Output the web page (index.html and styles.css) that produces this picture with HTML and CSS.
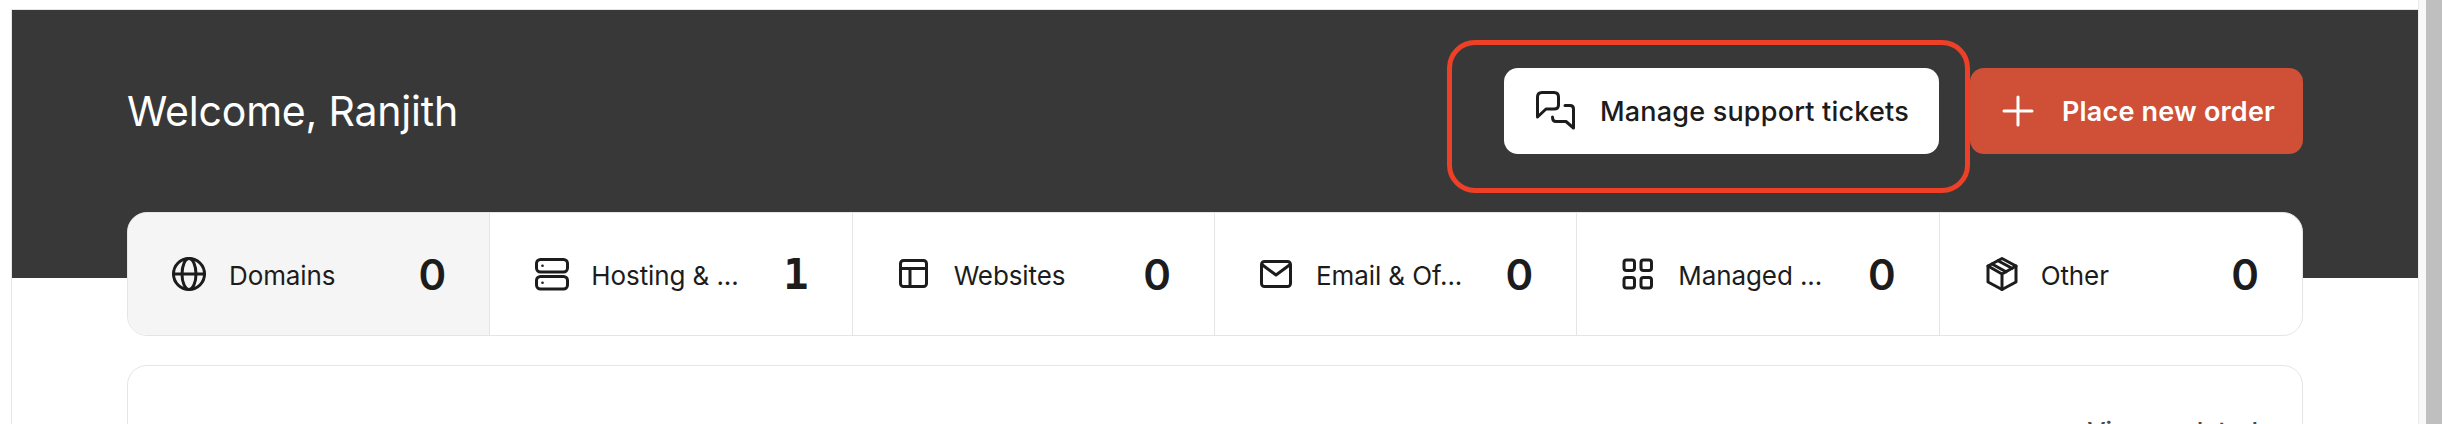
FILE: index.html
```html
<!DOCTYPE html>
<html lang="en">
<head>
    <meta charset="UTF-8">
    <meta name="viewport" content="width=device-width, initial-scale=1.0">
    <title>Dashboard</title>
    <link rel="stylesheet" href="styles.css">
</head>
<body>
    <div class="shell">
        <div class="hero">
            <h1>Welcome, Ranjith</h1>
            <div class="hero-actions">
                <div class="support">
                    <a class="button button-light">
                        <svg class="icon" viewBox="0 0 40 40">
                            <path d="M1.5 26V6Q1.5 1.5 6 1.5H18Q22.5 1.5 22.5 6V14Q22.5 18 18 18H10Z"/>
                            <path d="M29 14.5H34Q37.5 14.5 37.5 18V37L30 30.5H20Q16.5 30.5 16.5 26"/>
                        </svg>
                        Manage support tickets
                    </a>
                    <div class="callout"></div>
                </div>
                <a class="button button-primary">
                    <svg class="icon" viewBox="0 0 40 40">
                        <path d="M20 6V34M6 20H34"/>
                    </svg>
                    Place new order
                </a>
            </div>
        </div>

        <div class="tabs">
            <div class="tab active">
                <svg class="icon" viewBox="0 0 40 40">
                    <circle cx="20" cy="20" r="15.5"/>
                    <ellipse cx="20" cy="20" rx="7" ry="15.5"/>
                    <path d="M4.5 20H35.5"/>
                </svg>
                <span class="tab-label">Domains</span>
                <span class="tab-count">0</span>
            </div>
            <div class="tab">
                <svg class="icon" viewBox="0 0 40 40">
                    <rect x="5.5" y="5.5" width="31" height="12.5" rx="4"/>
                    <rect x="5.5" y="22.5" width="31" height="12.5" rx="4"/>
                    <circle class="dot" cx="11.5" cy="11.8" r="1.3"/>
                    <circle class="dot" cx="11.5" cy="28.8" r="1.3"/>
                </svg>
                <span class="tab-label">Hosting &amp; ...</span>
                <span class="tab-count tab-count-one">1</span>
            </div>
            <div class="tab">
                <svg class="icon" viewBox="0 0 40 40">
                    <rect x="6.5" y="6.5" width="26" height="26" rx="3"/>
                    <path d="M6.5 14.5H32.5M16 14.5V32.5"/>
                </svg>
                <span class="tab-label">Websites</span>
                <span class="tab-count">0</span>
            </div>
            <div class="tab">
                <svg class="icon" viewBox="0 0 40 40">
                    <rect x="5.5" y="7.5" width="29" height="25" rx="3"/>
                    <path d="M6.5 11L20 21L33.5 11"/>
                </svg>
                <span class="tab-label">Email &amp; Of...</span>
                <span class="tab-count">0</span>
            </div>
            <div class="tab">
                <svg class="icon" viewBox="0 0 40 40">
                    <rect x="6" y="6" width="10.5" height="10.5" rx="2.5"/>
                    <rect x="23" y="6" width="10.5" height="10.5" rx="2.5"/>
                    <rect x="6" y="23.5" width="10.5" height="10.5" rx="2.5"/>
                    <rect x="23" y="23.5" width="10.5" height="10.5" rx="2.5"/>
                </svg>
                <span class="tab-label">Managed ...</span>
                <span class="tab-count">0</span>
            </div>
            <div class="tab">
                <svg class="icon" viewBox="0 0 40 40">
                    <path d="M21 4.5L35 12V28L21 35.5L7 28V12Z"/>
                    <path d="M7 12L21 20L35 12M21 20V35.5"/>
                    <path d="M17 6.7L31 14.2M11 10L25 17.8"/>
                </svg>
                <span class="tab-label">Other</span>
                <span class="tab-count">0</span>
            </div>
        </div>

        <div class="card">
            <a class="card-link">View updated</a>
        </div>
    </div>

    <div class="scrollbar">
        <div class="scrollbar-thumb"></div>
    </div>
</body>
</html>
```

FILE: styles.css
```css
:root {
    --hero: #383838;
    --primary: #cf4f37;
    --callout: #ee4027;
    --text: #1c1c1c;
    --border: #e5e5e5;
}

* {
    margin: 0;
    padding: 0;
    box-sizing: border-box;
    font-family: 'Inter', 'Liberation Sans', sans-serif;
}

body {
    display: flex;
    height: 100vh;
    overflow: hidden;
    background: white;
    color: var(--text);
}

.shell {
    flex: 1;
    min-width: 0;
    margin: 9px 0 0 11px;
    border-top: 1px solid var(--border);
    border-left: 1px solid var(--border);
    overflow: hidden;
}

.hero {
    display: flex;
    justify-content: space-between;
    align-items: center;
    height: 268px;
    padding: 58px 115px 124px;
    background: var(--hero);
}

h1 {
    font-size: 41px;
    font-weight: 400;
    letter-spacing: -0.2px;
    color: white;
}

.hero-actions {
    display: flex;
    gap: 31px;
}

.support {
    position: relative;
}

.callout {
    position: absolute;
    top: -28px;
    right: -31px;
    bottom: -39px;
    left: -57px;
    border: 5px solid var(--callout);
    border-radius: 28px;
}

.button {
    display: flex;
    align-items: center;
    gap: 24px;
    height: 86px;
    border-radius: 14px;
    font-size: 27px;
    font-weight: 500;
    letter-spacing: 0.2px;
}

.button-light {
    padding: 0 30px 0 32px;
    background: white;
    color: var(--text);
}

.button-primary {
    padding: 0 28px;
    background: var(--primary);
    color: white;
    font-weight: 600;
}

.icon {
    flex: none;
    width: 40px;
    height: 40px;
    fill: none;
    stroke: currentColor;
    stroke-width: 3;
    stroke-linejoin: round;
    stroke-linecap: round;
}

.dot {
    fill: currentColor;
    stroke: none;
}

.tabs {
    display: grid;
    grid-template-columns: repeat(6, minmax(0, 1fr));
    height: 124px;
    margin: -66px 115px 0;
    background: white;
    border: 1px solid var(--border);
    border-radius: 20px;
    overflow: hidden;
}

.tab {
    display: flex;
    align-items: center;
    gap: 20px;
    padding: 0 43px 0 41px;
    border-right: 1px solid var(--border);
}

.tab:last-child {
    border-right: none;
}

.tab.active {
    background: #f5f5f5;
}

.tab-label {
    flex: 1;
    min-width: 0;
    padding-top: 3px;
    font-size: 26px;
    letter-spacing: -0.1px;
    white-space: nowrap;
}

.tab-count {
    font-size: 42px;
    font-weight: 600;
}

.tab-count-one {
    font-family: 'DejaVu Sans Mono', monospace;
    font-weight: 700;
}

.card {
    display: flex;
    justify-content: flex-end;
    height: 300px;
    margin: 29px 115px 0;
    padding: 50px 44px 0;
    border: 1px solid var(--border);
    border-radius: 20px;
}

.card-link {
    font-size: 26px;
    font-weight: 500;
    color: #4a4a4a;
}

.scrollbar {
    flex: none;
    width: 24px;
    padding-left: 7px;
    background: #f8f8f8;
    border-left: 1px solid #ececec;
}

.scrollbar-thumb {
    height: 100%;
    background: #bfbfbf;
}
```
